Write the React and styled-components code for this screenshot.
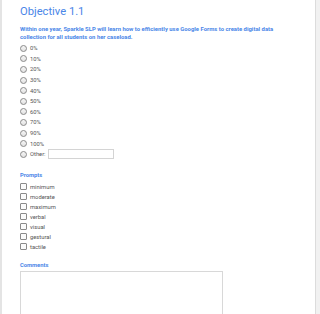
import React from "react";
import styled, { createGlobalStyle } from "styled-components";

const Global = createGlobalStyle`
  html, body { margin: 0; padding: 0; background: #f1f1f1; }
  body { font-family: Roboto, "Liberation Sans", Arial, sans-serif; }
`;

const Page = styled.div`
  width: 316px;
  height: 314px;
  overflow: hidden;
  background: #fff;
  border-left: 2px solid #e4e4e4;
  border-right: 1px solid #dcdcdc;
  box-sizing: border-box;
  padding: 5px 0 0 18px;
`;

const Title = styled.h1`
  margin: 0;
  font-size: 11.2px;
  font-weight: 400;
  color: #4a86e8;
  line-height: 14px;
`;

const Desc = styled.p`
  margin: 5.5px 0 2.5px;
  font-size: 5.9px;
  font-weight: 700;
  line-height: 8px;
  color: #4a86e8;
  width: 270px;
`;

const List = styled.div`
  display: flex;
  flex-direction: column;
`;

const Item = styled.label`
  display: flex;
  align-items: center;
  height: ${(p) => p.h}px;
  font-size: 5.8px;
  color: #555;
  gap: 3px;
`;

const Radio = styled.span`
  width: 5px;
  height: 5px;
  border-radius: 50%;
  border: 1px solid #8a8a8a;
  background: linear-gradient(#f6f6f6, #e2e2e2);
  flex: none;
`;

const Check = styled.span`
  width: 5px;
  height: 5px;
  border-radius: 1px;
  border: 1px solid #8a8a8a;
  background: #fafafa;
  flex: none;
`;

const OtherInput = styled.span`
  display: block;
  width: 64px;
  height: 8px;
  border: 1px solid #d4d4d4;
  margin-left: -1px;
`;

const Section = styled.div`
  font-size: 5.8px;
  font-weight: 700;
  color: #4a86e8;
  margin-top: ${(p) => p.mt}px;
  margin-bottom: ${(p) => p.mb}px;
`;

const TextArea = styled.div`
  width: 201px;
  height: 60px;
  border: 1px solid #d8d8d8;
`;

const radios = ["0%", "10%", "20%", "30%", "40%", "50%", "60%", "70%", "90%", "100%"];
const checks = ["minimum", "moderate", "maximum", "verbal", "visual", "gestural", "tactile"];

export default function App() {
  return (
    <>
      <Global />
      <Page>
        <Title>Objective 1.1</Title>
        <Desc>
          Within one year, Sparkle SLP will learn how to efficiently use Google Forms to create digital data
          collection for all students on her caseload.
        </Desc>
        <List>
          {radios.map((r) => (
            <Item key={r} h={10.6}>
              <Radio />
              {r}
            </Item>
          ))}
          <Item h={10.6}>
            <Radio />
            Other:
            <OtherInput />
          </Item>
        </List>
        <Section mt={12} mb={4}>Prompts</Section>
        <List>
          {checks.map((c) => (
            <Item key={c} h={10}>
              <Check />
              {c}
            </Item>
          ))}
        </List>
        <Section mt={10.5} mb={3}>Comments</Section>
        <TextArea />
      </Page>
    </>
  );
}
